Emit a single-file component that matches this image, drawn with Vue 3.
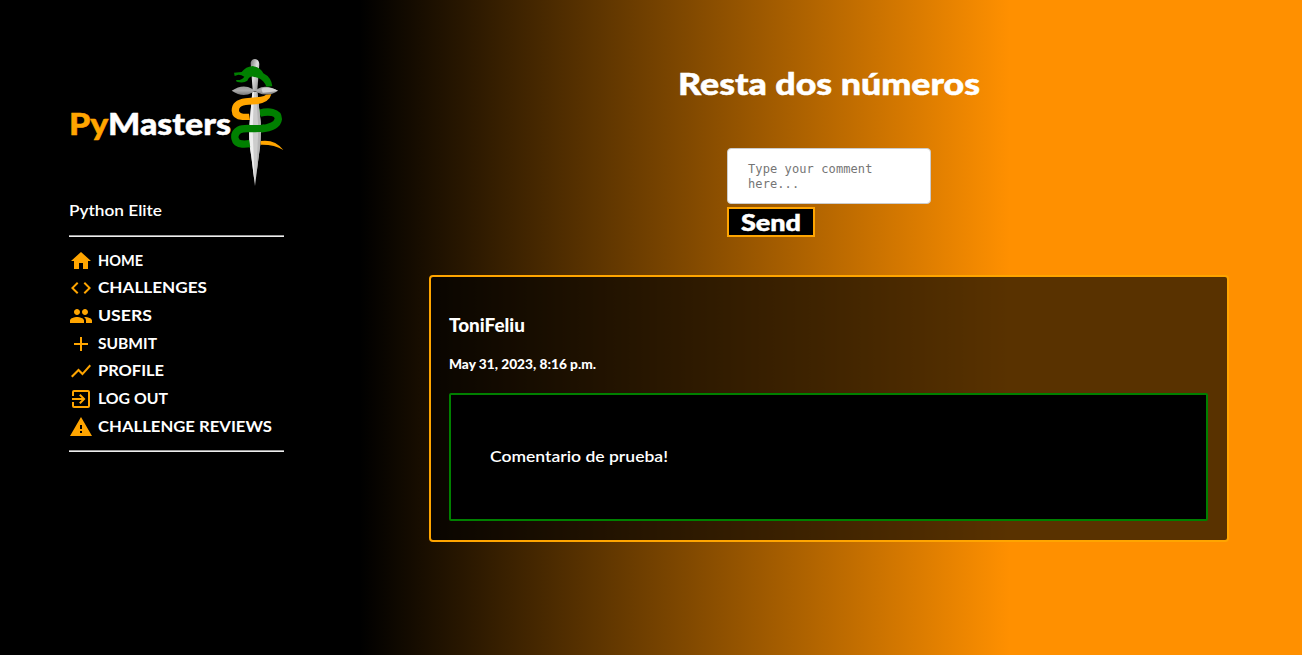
<script setup>
const links = [
  { label: 'HOME', w: 45, d: 'M10 20v-6h4v6h5v-8h3L12 3 2 12h3v8z' },
  { label: 'CHALLENGES', w: 109, d: 'M9.4 16.6 4.8 12l4.6-4.6L8 6l-6 6 6 6 1.4-1.4zm5.2 0 4.6-4.6-4.6-4.6L16 6l6 6-6 6-1.4-1.4z' },
  { label: 'USERS', w: 54, d: 'M16 11c1.66 0 2.99-1.34 2.99-3S17.66 5 16 5s-3 1.34-3 3 1.34 3 3 3zm-8 0c1.66 0 2.99-1.34 2.99-3S9.66 5 8 5 5 6.34 5 8s1.34 3 3 3zm0 2c-2.33 0-7 1.17-7 3.5V19h14v-2.5c0-2.33-4.67-3.5-7-3.5zm8 0c-.29 0-.62.02-.97.05 1.16.84 1.97 1.97 1.97 3.45V19h6v-2.5c0-2.33-4.67-3.5-7-3.5z' },
  { label: 'SUBMIT', w: 59, d: 'M19 13h-6v6h-2v-6H5v-2h6V5h2v6h6v2z' },
  { label: 'PROFILE', w: 66, d: 'M3.5 18.49l6-6.01 4 4L22 6.92l-1.41-1.41-7.09 7.97-4-4L2 16.99z' },
  { label: 'LOG OUT', w: 70, d: 'M10.09 15.59 11.5 17l5-5-5-5-1.41 1.41L12.67 11H3v2h9.67l-2.58 2.59zM19 3H5a2 2 0 0 0-2 2v4h2V5h14v14H5v-4H3v4a2 2 0 0 0 2 2h14a2 2 0 0 0 2-2V5a2 2 0 0 0-2-2z' },
  { label: 'CHALLENGE REVIEWS', w: 174, d: 'M1 21h22L12 2 1 21zm12-3h-2v-2h2v2zm0-4h-2v-4h2v4z' },
]
</script>

<template>
  <div class="page">
    <aside class="sidebar">
      <div class="brand">
        <svg class="wordmark" width="162" height="48">
          <text y="32" textLength="162" lengthAdjust="spacingAndGlyphs"><tspan class="accent">Py</tspan><tspan>Masters</tspan></text>
        </svg>
        <svg class="sword" viewBox="33 24 162 388" width="54" height="129.33">
          <defs>
            <linearGradient id="hilt" x1="0" x2="1" y1="0" y2="1">
              <stop offset="0" stop-color="#777" /><stop offset=".45" stop-color="#ddd" /><stop offset="1" stop-color="#888" />
            </linearGradient>
            <linearGradient id="guard" x1="0" x2="0" y1="0" y2="1">
              <stop offset="0" stop-color="#999" /><stop offset=".5" stop-color="#aaa" /><stop offset="1" stop-color="#777" />
            </linearGradient>
          </defs>
          <path d="M92 39Q94 27 105 27Q117 29 118 42L112 121H98Z" fill="url(#hilt)" />
          <path d="M119 190C146 182 175 186 175 207C173 224 150 234 120 237" class="coil green" />
          <path d="M97 126H112L122 216Q125 270 116 320L105 408L94 320Q84 270 89 216Z" fill="#ccc" />
          <path d="M97 126H102L98 240L104 400L94 320Q84 270 89 216Z" fill="#eee" />
          <path d="M108 126H112L122 216Q125 270 116 320L109 374L115 235Z" fill="#b5b5b5" />
          <path d="M35 122Q68 100 96 116Q105 124 114 116Q137 102 174 122Q144 142 114 128Q105 121 96 128Q68 144 35 122Z" fill="url(#guard)" />
          <path d="M124 116Q144 107 174 122Q150 126 128 128Z" fill="#d2d2d2" />
          <path d="M42 68L65 66Q77 50 98 48Q121 52 130 70Q154 82 157 109L139 110Q133 92 115 84L100 80Q88 78 82 92Q70 101 50 95L48 90Q65 92 73 80Q65 74 55 74L44 78Z" fill="#008000" />
          <path d="M154 133Q148 157 111 163C76 164 58 166 57 181Q57 190 70 191H87L90 210H67Q36 208 35 182Q35 150 76 145L122 140Q134 138 138 134Z" fill="#ffa500" />
          <path d="M134 234C96 240 75 230 57 240C37 252 42 282 66 282Q76 283 89 281" class="coil green" />
          <path d="M122 273Q165 267 190 300Q163 283 122 284Z" fill="#ffa500" />
        </svg>
      </div>
      <svg class="rank" width="93" height="24"><text y="17" textLength="93" lengthAdjust="spacingAndGlyphs">Python Elite</text></svg>
      <div class="rule"></div>
      <nav>
        <a v-for="link in links" :key="link.label">
          <svg class="icon" viewBox="0 0 24 24"><path :d="link.d" /></svg>
          <svg class="label" :width="link.w" height="22"><text y="16" :textLength="link.w" lengthAdjust="spacingAndGlyphs">{{ link.label }}</text></svg>
        </a>
      </nav>
      <div class="rule"></div>
    </aside>
    <main>
      <h1><svg width="302" height="44"><text y="31" textLength="302" lengthAdjust="spacingAndGlyphs">Resta dos números</text></svg></h1>
      <form @submit.prevent>
        <textarea placeholder="Type your comment here..."></textarea>
        <button><svg width="60" height="26"><text y="22" textLength="60" lengthAdjust="spacingAndGlyphs">Send</text></svg></button>
      </form>
      <article>
        <svg class="author" width="76" height="26"><text y="18.5" textLength="76" lengthAdjust="spacingAndGlyphs">ToniFeliu</text></svg>
        <svg class="date" width="147" height="22"><text y="15.5" textLength="147" lengthAdjust="spacingAndGlyphs">May 31, 2023, 8:16 p.m.</text></svg>
        <div class="comment">
          <svg width="178" height="24"><text y="17" textLength="178" lengthAdjust="spacingAndGlyphs">Comentario de prueba!</text></svg>
        </div>
      </article>
    </main>
  </div>
</template>

<style>
body { margin: 0; overflow: hidden; background: #000; }
</style>

<style scoped>
.page {
  display: flex;
  box-sizing: border-box;
  height: 655px;
  font-family: Lato, sans-serif;
  color: #fff;
  background: linear-gradient(to right, #000 360px, #ff9000 1010px);
}
svg { display: block; overflow: visible; flex: none; }
text { fill: currentColor; }
.sidebar { width: 215px; margin-left: 69px; padding-top: 58px; flex: none; }
.brand { display: flex; height: 130px; }
.wordmark { margin-top: 45px; font-size: 31px; font-weight: 900; }
.accent { fill: #ffa500; }
.coil { fill: none; stroke-width: 22; }
.green { stroke: #008000; }
.rank { margin-top: 11px; font-size: 16px; font-weight: 600; }
.rule { height: 1px; background: #eee; border-top: 1px solid #9a9a9a; }
.rank + .rule { margin-top: 12px; }
nav { padding: 9.7px 0 9.3px; }
nav a { display: flex; align-items: center; height: 27.7px; gap: 5px; }
.icon { width: 24px; height: 24px; fill: #ffa500; }
.label { font-size: 15.5px; font-weight: 700; }
main { width: 800px; margin-left: 145px; flex: none; }
h1 { display: flex; justify-content: center; margin: 64px 0 0; font-size: 31px; font-weight: 900; }
h1 text, .wordmark text, button text { stroke: currentColor; stroke-width: .5px; }
.wordmark .accent { stroke: #ffa500; }
form { width: 204px; margin: 40px auto 0; }
textarea {
  display: block;
  box-sizing: border-box;
  width: 204px;
  height: 56px;
  padding: 13px 20px 11px;
  border: 1px solid #ccc;
  border-radius: 4px;
  resize: none;
  overflow: hidden;
  background: #fff;
  font: 12px/15px "DejaVu Sans Mono", monospace;
  letter-spacing: .1px;
}
textarea::placeholder { color: #757575; }
button {
  display: block;
  box-sizing: border-box;
  width: 88px;
  height: 30px;
  margin-top: 3px;
  padding: 0 12px;
  border: 2px solid #ffa500;
  background: #000;
  color: #fff;
  font: 900 23.5px Lato, sans-serif;
}
article {
  box-sizing: border-box;
  height: 267px;
  margin-top: 38px;
  padding: 36px 19px 0 18px;
  border: 2px solid #ffa500;
  border-radius: 4px;
  background: rgba(0, 0, 0, .65);
}
.author { font-size: 18.7px; font-weight: 900; }
.date { margin-top: 14px; font-size: 13.3px; font-weight: 900; }
.comment {
  box-sizing: border-box;
  height: 128px;
  margin-top: 18px;
  padding: 50px 38.5px;
  border: 2px solid #008000;
  border-radius: 2px;
  background: #000;
  font-size: 16px;
  font-weight: 600;
}
</style>
